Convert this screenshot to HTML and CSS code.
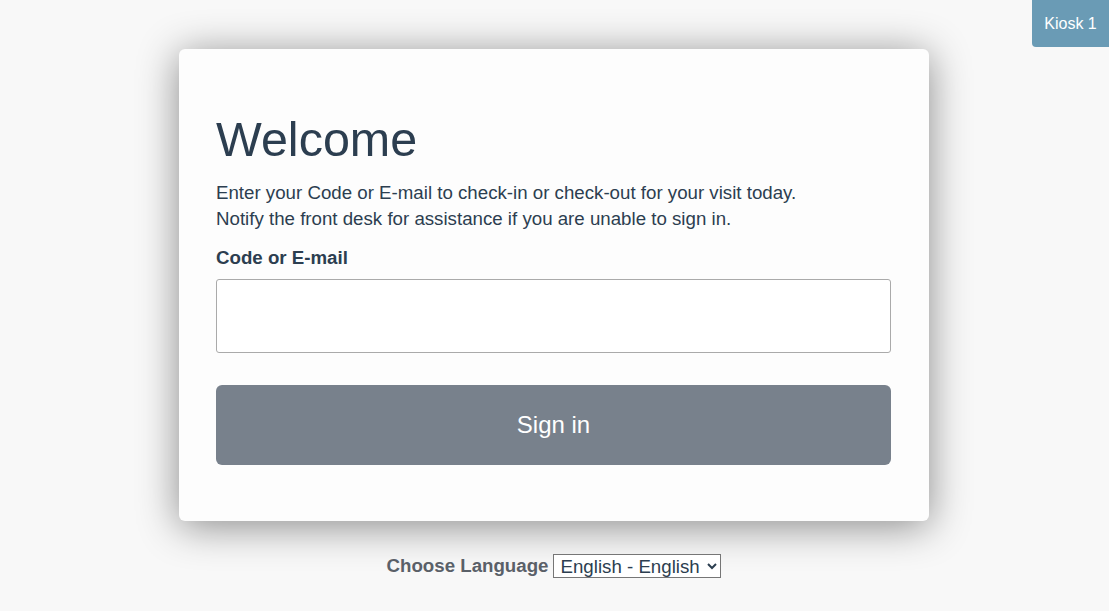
FILE: index.html
```html
<!DOCTYPE html>
<html lang="en">
<head>
<meta charset="utf-8">
<title>Welcome</title>
<link rel="stylesheet" href="styles.css">
</head>
<body>
<div class="kiosk">Kiosk 1</div>
<main class="page">
  <section class="card">
    <h1 class="title">Welcome</h1>
    <p class="intro">Enter your Code or E-mail to check-in or check-out for your visit today.<br>Notify the front desk for assistance if you are unable to sign in.</p>
    <label class="label" for="code">Code or E-mail</label>
    <input class="field" id="code" type="text">
    <button class="btn" type="button">Sign in</button>
  </section>
  <div class="lang">
    <span class="lang-label">Choose Language</span>
    <select class="lang-select"><option>English - English</option></select>
  </div>
</main>
</body>
</html>
```
FILE: styles.css
```css
html, body {
  margin: 0;
  padding: 0;
  background: #f8f8f8;
  font-family: "Liberation Sans", Arial, sans-serif;
  color: #2c3e50;
}
.kiosk {
  position: absolute;
  top: 0;
  right: 0;
  width: 77px;
  height: 47px;
  background: #6a9bb5;
  color: #fff;
  font-size: 16px;
  display: flex;
  align-items: center;
  justify-content: center;
  border-bottom-left-radius: 4px;
}
.page {
  display: flex;
  flex-direction: column;
  align-items: center;
  padding-top: 49px;
}
.card {
  width: 750px;
  margin-right: 1px;
  box-sizing: border-box;
  background: #fdfdfd;
  border-radius: 6px;
  box-shadow: 0 5px 40px rgba(0,0,0,0.45);
  padding: 62px 38px 56px 37px;
  display: flex;
  flex-direction: column;
}
.title {
  margin: 0;
  font-size: 48.5px;
  font-weight: normal;
  line-height: 56px;
}
.intro {
  margin: 13px 0 0;
  font-size: 18.7px;
  line-height: 26px;
}
.label {
  margin-top: 14px;
  font-size: 18.7px;
  font-weight: bold;
  line-height: 24px;
}
.field {
  margin-top: 9px;
  height: 74px;
  box-sizing: border-box;
  border: 1px solid #aaa;
  border-radius: 3px;
  background: #fff;
  font-size: 20px;
  padding: 0 12px;
}
.btn {
  margin-top: 32px;
  height: 80px;
  border: none;
  border-radius: 6px;
  background: #78818c;
  color: #fff;
  font-family: "Liberation Sans", Arial, sans-serif;
  font-size: 24px;
}
.lang {
  margin-top: 33px;
  margin-right: 1px;
  display: flex;
  align-items: center;
  gap: 5px;
}
.lang-label {
  font-size: 18.7px;
  font-weight: bold;
  color: #5a6068;
}
.lang-select {
  font-family: "Liberation Sans", Arial, sans-serif;
  font-size: 18.7px;
  color: #2c3e50;
  background: #fff;
  border: 1px solid #767676;
  border-radius: 0;
  height: 24px;
  padding: 0 4px 0 2px;
}
```
